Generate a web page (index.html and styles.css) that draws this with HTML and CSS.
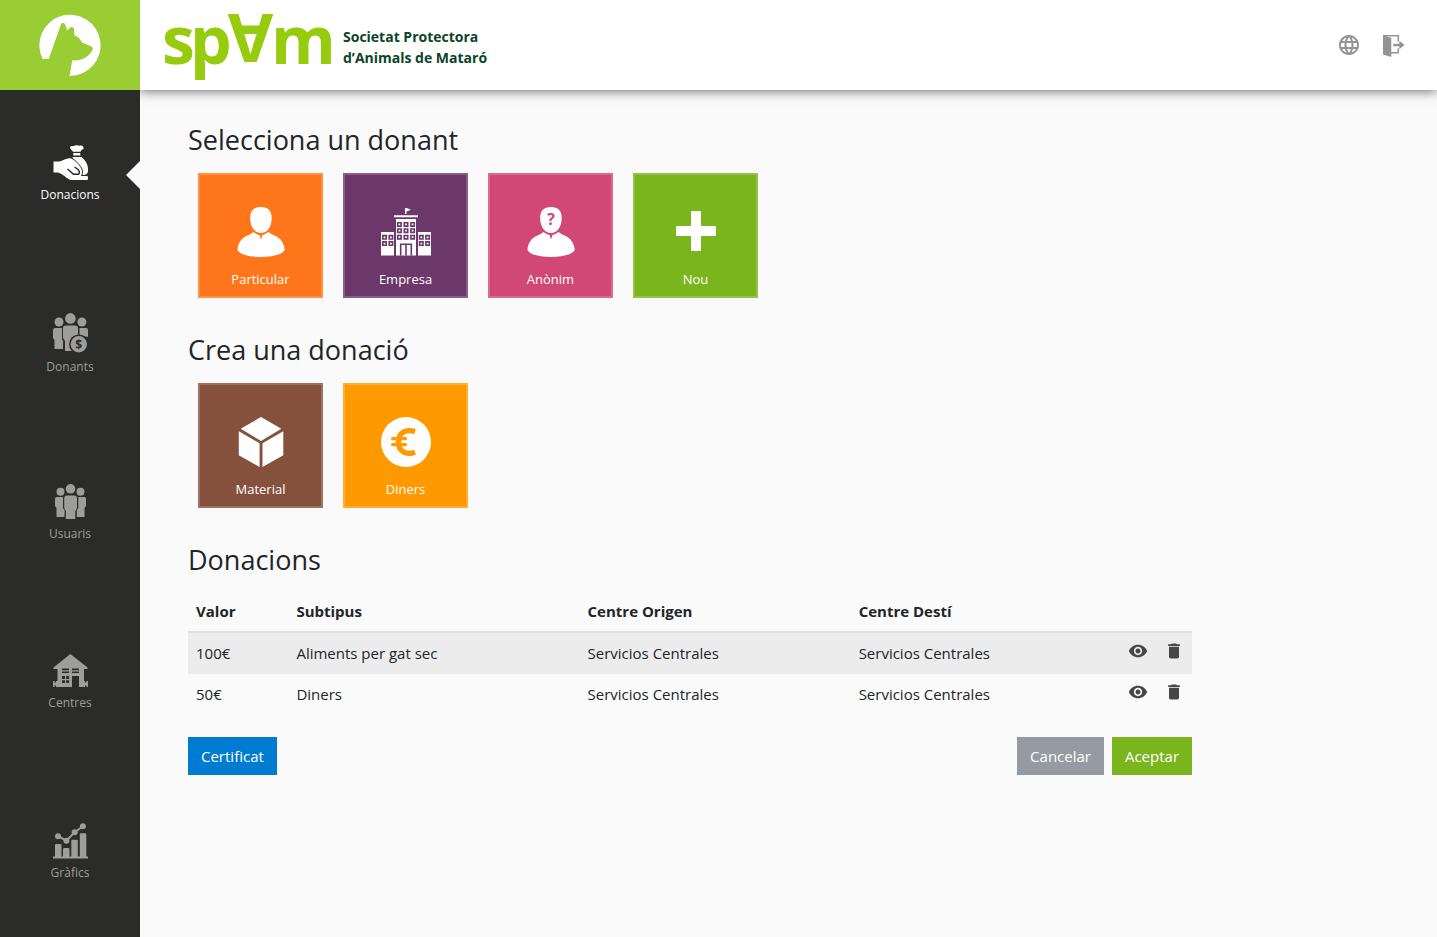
FILE: index.html
```html
<!DOCTYPE html>
<html lang="ca">
<head>
<meta charset="utf-8">
<meta name="viewport" content="width=device-width, initial-scale=1">
<title>SPAM - Donacions</title>
<link rel="stylesheet" href="styles.css">
</head>
<body>
<div class="app">
  <aside class="sidebar">
    <a class="brand" href="#" aria-label="Inici">
      <svg width="62" height="63" viewBox="39 14 62 63" fill="#fff"><path d="M42.6 59A30.6 30.6 0 1 1 69.5 75.9L72.3 60.3C81 61.5 89 57 92.7 49.5 93 48 92.500 47 91 46.300L82 42.500C81 40 78 36 74.500 35.700L74 28.500C73.500 27 71 26.500 70 27.500L67.300 30.500 65 24C64 22.700 62 22.500 61 24.300L48.700 59Z"/></svg>
    </a>
    <nav class="nav">
      <a class="nav-item active" href="#">
        <svg width="36" height="36" viewBox="-1 0 36 36"><path fill="currentColor" d="M17 2.500C17.500 .500 20 1.500 21.500 .800 23.500-.3 26 1 27.500.6 29.500.2 31 2 30.500 4 28.500 4.500 28 5.500 27.500 6.800H20C19.500 5.500 17 4.500 17 2.500ZM20.300 8h7v2.600h-7ZM19.500 12H28.500C33.500 16 35.500 21 35 26 34.800 29.500 32 30.500 26 30Z"/><path fill="currentColor" stroke="#2b2b29" d="M0 16H6.500C10 15 13 12.800 17 12.700 21 13.500 26 19 28.500 23 30 26 29.800 28.500 28.500 30.500H34C36 31 36 35 34 35.500H17C12 32.500 9 29 5 28H0Z"/><path fill="none" stroke="#2b2b29" stroke-width="1.500" d="M14.500 24 20.500 29.300H25.500C27 28 26.500 26 25 24.500L21.500 22"/></svg>
        <span>Donacions</span>
      </a>
      <a class="nav-item" href="#">
        <svg width="36" height="40" viewBox="-1 0 36 40" fill="currentColor"><circle cx="6" cy="9" r="4.500"/><circle cx="28.900" cy="9" r="4.500"/><circle cx="17.400" cy="5.400" r="5.300"/><path d="M2 15H9V26.500L10 28V36H1.500V27L0 25V17Q0 15 2 15ZM33 15H26.500V22L35 24V17Q35 15 33 15ZM12.500 12.500H22.500Q25 12.500 25 15V27L22 38H12V28L10 25V15Q10 12.500 12.500 12.500Z"/><circle cx="25.800" cy="31.300" r="9.800" fill="#2b2b29"/><circle cx="25.800" cy="31.300" r="8.200"/><text x="25.800" y="35.500" text-anchor="middle" font-size="12" font-weight="700" fill="#2b2b29">$</text></svg>
        <span>Donants</span>
      </a>
      <a class="nav-item" href="#">
        <svg width="32" height="36" viewBox="-1 0 32 36" fill="currentColor"><circle cx="5.500" cy="7.800" r="4"/><circle cx="25.500" cy="7.800" r="4"/><circle cx="15.500" cy="4.800" r="4.800"/><path d="M1.500 13H8V24L9.500 26V33H1.500V24L0 22V15Q0 13 1.500 13ZM29.500 13H23.300V24L21.800 26V33H29.500V24L31 22V15Q31 13 29.500 13ZM11.500 11.500H19.800Q22 11.500 22 14V24L20.300 27V35H10.800V27L9.200 24V14Q9.200 11.500 11.500 11.500Z"/></svg>
        <span>Usuaris</span>
      </a>
      <a class="nav-item" href="#">
        <svg width="36" height="36" viewBox="-1 -1 36 36" fill="currentColor"><path d="M17.400 0 34.500 13.500V15H31V33H26V22H19V33H4.500V15H.5V13.500ZM0 27h1.500v1.500H3V27h1.500v6H3v-1.500H1.500V33H0ZM30.500 27H32v1.500h1.500V27H35v6h-1.500v-1.500H32V33h-1.500Z"/><path d="M9 14.500h7V19H9ZM19 14.500h7V19h-7ZM9 22h7v7H9Z" fill="#2b2b29"/><path d="M8 16.200h19v1.200H8ZM8 25h9v1.200H8ZM12 21h1.200v9H12Z"/></svg>
        <span>Centres</span>
      </a>
      <a class="nav-item" href="#">
        <svg width="36" height="36" viewBox="-1 0 36 36" fill="currentColor"><path d="M0 33.500h35v2H0ZM2 22q0-1 1-1h4.500q1 0 1 1v12H2ZM10 26q0-1 1-1h4.500q1 0 1 1v8H10ZM18.300 17.700q0-1 1-1h4.500q1 0 1 1V34H18.300ZM26.800 11.300q0-1 1-1h4.500q1 0 1 1V34H26.800Z"/><path d="M5 13.200 13.400 17.700 21.700 9.200 29.900 3.300" fill="none" stroke="currentColor" stroke-width="2"/><circle cx="5" cy="13.200" r="3"/><circle cx="13.400" cy="17.700" r="3"/><circle cx="21.700" cy="9.200" r="3"/><circle cx="29.900" cy="3.300" r="3"/></svg>
        <span>Gràfics</span>
      </a>
    </nav>
  </aside>

  <header class="topbar">
    <a class="logo" href="#">
      <svg width="168" height="72" viewBox="0 0 168 72" fill="#97cb0e" class="wordmark"><text y="55" x="-2 26 107">spm</text><text transform="rotate(180 86.5 30)" x="86.5" y="55" text-anchor="middle">A</text></svg>
      <span class="tagline">Societat Protectora<br>d’Animals de Mataró</span>
    </a>
    <div class="tools">
      <button type="button" class="icon-btn" aria-label="Idioma"><svg width="24" height="24" viewBox="0 0 24 24" fill="currentColor"><path d="M11.990 2C6.470 2 2 6.480 2 12s4.470 10 9.990 10C17.520 22 22 17.520 22 12S17.520 2 11.990 2zm6.930 6h-2.950c-.32-1.250-.78-2.450-1.380-3.560 1.840.63 3.370 1.910 4.330 3.560zM12 4.040c.83 1.200 1.480 2.530 1.910 3.960h-3.820c.43-1.430 1.080-2.760 1.910-3.960zM4.260 14C4.100 13.360 4 12.690 4 12s.1-1.360.26-2h3.380c-.08.66-.14 1.320-.14 2 0 .68.06 1.340.14 2H4.260zm.82 2h2.950c.32 1.250.78 2.450 1.380 3.560-1.840-.63-3.370-1.900-4.330-3.560zm2.950-8H5.080c.96-1.660 2.490-2.930 4.330-3.560C8.810 5.550 8.350 6.750 8.030 8zM12 19.960c-.83-1.200-1.480-2.530-1.910-3.960h3.820c-.43 1.430-1.080 2.760-1.910 3.960zM14.340 14H9.660c-.09-.66-.16-1.320-.16-2 0-.68.07-1.350.16-2h4.680c.09.65.16 1.320.16 2 0 .68-.07 1.340-.16 2zm.25 5.560c.6-1.110 1.060-2.310 1.380-3.560h2.950c-.96 1.650-2.490 2.930-4.330 3.560zM16.360 14c.08-.66.14-1.320.14-2 0-.68-.06-1.340-.14-2h3.380c.16.64.26 1.310.26 2s-.1 1.360-.26 2h-3.380z"/></svg></button>
      <button type="button" class="icon-btn" aria-label="Surt"><svg width="22" height="24" viewBox="0 -2 22 24" fill="currentColor"><path d="M0 0 8.300 3V22L0 19.500ZM16.300 5.700 21.500 10 16.300 14.300V11.200H10.300V8.800H16.300Z"/><path d="M0 .8H15.300V6.500M15.300 13.500V17.700H8" fill="none" stroke="currentColor" stroke-width="1.500"/></svg></button>
    </div>
  </header>

  <main class="content">
    <section>
      <h2>Selecciona un donant</h2>
      <div class="tiles">
        <button type="button" class="tile orange">
          <svg width="50" height="50" viewBox="0 0 50 50" fill="#fff"><path d="M25 0C32 0 35.700 3.500 35.700 11 35.700 20 31 26 25 26S14.200 20 14.200 11C14.200 3.500 18 0 25 0ZM17.500 25C20 27 23 27.700 23.700 28.300L25 32.500 26.300 28.300C27 27.700 30 27 32.500 25 36 28 41 29 44 32 47 35 48.700 40 48.700 43 46 48 35 50 25 50S4 48 1.500 43C1.500 39 3 35 6 32 9 29 14 28 17.500 25Z"/></svg>
          <span>Particular</span>
        </button>
        <button type="button" class="tile purple">
          <svg width="50" height="50" viewBox="0 0 50 50" fill="#fff"><path d="M24 1h1.500l4.500 1.700-4.500 1.800V7H24ZM13 8.300h24v2H13ZM15 12h20v36.500H15ZM0 25h13v23.500H0ZM37 25h13v23.500H37Z"/><g fill="none" stroke="#6b3869" stroke-width="1.600"><path d="M16.700 15.700h3.400v3.400h-3.400ZM23.300 15.700h3.400v3.400h-3.400ZM29.900 15.700h3.400v3.400h-3.400ZM16.700 22h3.400v3.400h-3.400ZM23.300 22h3.400v3.400h-3.400ZM29.900 22h3.400v3.400h-3.400ZM16.700 28.500h3.400v3.400h-3.400ZM23.300 28.500h3.400v3.400h-3.400ZM29.900 28.500h3.400v3.400h-3.400ZM1.800 28.600h3.400V32H1.800ZM8.200 28.600h3.400V32H8.200ZM1.800 34.900h3.400v3.400H1.800ZM8.200 34.900h3.400v3.400H8.200ZM38.600 28.600H42V32h-3.400ZM44.900 28.600h3.400V32h-3.400ZM38.600 34.900H42v3.400h-3.400ZM44.900 34.900h3.400v3.400h-3.400ZM19.700 48.500V37.300H30.300V48.500M25 37V48.500"/></g></svg>
          <span>Empresa</span>
        </button>
        <button type="button" class="tile pink">
          <svg width="50" height="50" viewBox="0 0 50 50" fill="#fff"><path d="M25 0C32 0 35.700 3.500 35.700 11 35.700 20 31 26 25 26S14.200 20 14.200 11C14.200 3.500 18 0 25 0ZM17.500 25C20 27 23 27.700 23.700 28.300L25 32.500 26.300 28.300C27 27.700 30 27 32.500 25 36 28 41 29 44 32 47 35 48.700 40 48.700 43 46 48 35 50 25 50S4 48 1.500 43C1.500 39 3 35 6 32 9 29 14 28 17.500 25Z"/><text x="25" y="18" text-anchor="middle" font-size="16" font-weight="700" fill="#d14775">?</text></svg>
          <span>Anònim</span>
        </button>
        <button type="button" class="tile green">
          <svg width="50" height="50" viewBox="0 0 50 50" fill="#fff"><rect x="20" y="4" width="10" height="40" rx="1"/><rect x="5" y="19" width="40" height="10" rx="1"/></svg>
          <span>Nou</span>
        </button>
      </div>
    </section>

    <section>
      <h2>Crea una donació</h2>
      <div class="tiles">
        <button type="button" class="tile brown">
          <svg width="50" height="50" viewBox="0 0 50 50" fill="#fff"><path d="M25 0 45.300 11.800 25 24 4.700 11.800ZM2.800 14.300 23.600 26.300V50L2.800 38.300ZM47.300 14.300 26.500 26.300V50L47.300 38.300Z"/></svg>
          <span>Material</span>
        </button>
        <button type="button" class="tile amber">
          <svg width="50" height="50" viewBox="0 0 50 50" fill="none" stroke="#ff9900"><circle cx="25" cy="25" r="25" fill="#fff" stroke="none"/><path stroke-width="5.400" d="M34 14.600C26 12 17.500 14.500 17.500 25S26 38 34 35.200"/><path stroke-width="3.200" stroke-linecap="round" d="M11.600 21.700H24.500M11.600 27.700H24.500"/></svg>
          <span>Diners</span>
        </button>
      </div>
    </section>

    <section>
      <h2>Donacions</h2>
      <div class="donations">
        <table>
          <thead>
            <tr><th class="c-value" scope="col">Valor</th><th class="c-type" scope="col">Subtipus</th><th class="c-centre" scope="col">Centre Origen</th><th class="c-centre" scope="col">Centre Destí</th><th></th></tr>
          </thead>
          <tbody>
            <tr>
              <td>100€</td><td>Aliments per gat sec</td><td>Servicios Centrales</td><td>Servicios Centrales</td>
              <td><div class="actions">
                <button type="button" class="row-btn" aria-label="Veure"><svg width="20" height="20" viewBox="0 0 24 24" fill="currentColor"><path d="M12 4.500C7 4.500 2.730 7.610 1 12c1.730 4.390 6 7.500 11 7.500s9.270-3.110 11-7.500c-1.730-4.390-6-7.500-11-7.500zM12 17c-2.760 0-5-2.240-5-5s2.240-5 5-5 5 2.240 5 5-2.240 5-5 5zm0-8c-1.660 0-3 1.340-3 3s1.340 3 3 3 3-1.340 3-3-1.340-3-3-3z"/></svg></button>
                <button type="button" class="row-btn" aria-label="Eliminar"><svg width="20" height="20" viewBox="0 0 24 24" fill="currentColor"><path d="M6 19c0 1.100.9 2 2 2h8c1.100 0 2-.9 2-2V7H6v12zM19 4h-3.500l-1-1h-5l-1 1H5v2h14V4z"/></svg></button>
              </div></td>
            </tr>
            <tr>
              <td>50€</td><td>Diners</td><td>Servicios Centrales</td><td>Servicios Centrales</td>
              <td><div class="actions">
                <button type="button" class="row-btn" aria-label="Veure"><svg width="20" height="20" viewBox="0 0 24 24" fill="currentColor"><path d="M12 4.500C7 4.500 2.730 7.610 1 12c1.730 4.390 6 7.500 11 7.500s9.270-3.110 11-7.500c-1.730-4.390-6-7.500-11-7.500zM12 17c-2.760 0-5-2.240-5-5s2.240-5 5-5 5 2.240 5 5-2.240 5-5 5zm0-8c-1.660 0-3 1.340-3 3s1.340 3 3 3 3-1.340 3-3-1.340-3-3-3z"/></svg></button>
                <button type="button" class="row-btn" aria-label="Eliminar"><svg width="20" height="20" viewBox="0 0 24 24" fill="currentColor"><path d="M6 19c0 1.100.9 2 2 2h8c1.100 0 2-.9 2-2V7H6v12zM19 4h-3.500l-1-1h-5l-1 1H5v2h14V4z"/></svg></button>
              </div></td>
            </tr>
          </tbody>
        </table>
        <div class="footer-actions">
          <button type="button" class="btn blue">Certificat</button>
          <button type="button" class="btn grey push">Cancelar</button>
          <button type="button" class="btn green">Aceptar</button>
        </div>
      </div>
    </section>
  </main>
</div>
</body>
</html>
```

FILE: styles.css
```css
* { box-sizing: border-box; }

body {
  margin: 0;
  background: #fafafa;
  color: #212529;
  font-family: "Open Sans", "Noto Sans", sans-serif;
  font-size: 15px;
  line-height: 24px;
}

button {
  font: inherit;
  cursor: pointer;
}

svg { display: block; }

.app {
  display: grid;
  grid-template-columns: 140px 1fr;
  grid-template-rows: 90px 1fr;
  min-height: 100vh;
}

/* Sidebar */
.sidebar {
  grid-row: 1 / 3;
  display: flex;
  flex-direction: column;
  background: #2b2b29;
  position: relative;
  z-index: 2;
}

.brand {
  display: flex;
  align-items: center;
  justify-content: center;
  height: 90px;
  background: #9acc33;
}

.nav {
  flex: 1;
  display: flex;
  flex-direction: column;
}

.nav-item {
  flex: 1;
  position: relative;
  display: flex;
  flex-direction: column;
  align-items: center;
  justify-content: center;
  gap: 5px;
  color: #9d9d9c;
  font-size: 12px;
  font-weight: 500;
  line-height: 18px;
  text-decoration: none;
}

.nav-item.active { color: #fff; }

.nav-item.active::after {
  content: "";
  position: absolute;
  right: 0;
  top: 50%;
  margin-top: -14px;
  border: 14px solid transparent;
  border-left-width: 0;
  border-right-color: #fafafa;
}

/* Header */
.topbar {
  display: flex;
  align-items: center;
  justify-content: space-between;
  padding: 0 32px 0 24px;
  background: #fff;
  box-shadow: 0 2px 10px rgba(0, 0, 0, 0.5);
  z-index: 1;
}

.logo {
  display: flex;
  align-items: center;
  gap: 11px;
  text-decoration: none;
}

.wordmark {
  font-size: 66px;
  font-weight: 700;
  overflow: visible;
}

.tagline {
  color: #0c4428;
  font-size: 14px;
  font-weight: 700;
  line-height: 21px;
  padding-top: 4px;
}

.tools {
  display: flex;
  align-items: center;
  gap: 22px;
}

.icon-btn,
.row-btn {
  padding: 0;
  border: 0;
  background: none;
}

.icon-btn { color: #949494; }
.row-btn { color: #464646; }

/* Content */
.content { padding: 33px 48px; }

section { margin-bottom: 35px; }

h2 {
  margin: 0;
  font-size: 27px;
  font-weight: 500;
  line-height: 34px;
}

.tiles {
  display: flex;
  flex-wrap: wrap;
  gap: 20px;
  padding: 16px 10px 0;
}

.tile {
  display: flex;
  flex-direction: column;
  align-items: center;
  width: 125px;
  height: 125px;
  padding: 32px 0 0;
  border: 2px solid rgba(255, 255, 255, 0.2);
  color: #fff;
  font-size: 13px;
  line-height: 20px;
  gap: 12px;
}

.orange { background: #ff751a; }
.purple { background: #6b3869; }
.pink { background: #d14775; }
.green { background: #7ab51d; }
.brown { background: #85513d; }
.amber { background: #ff9900; }
.blue { background: #007bd2; }
.grey { background: #969ba3; }

/* Donations */
.donations {
  width: 83.6%;
  padding-top: 14px;
}

table {
  width: 100%;
  table-layout: fixed;
  border-collapse: separate;
  border-spacing: 0;
}

th,
td {
  padding: 8px;
  text-align: left;
}

th {
  font-weight: 700;
  border-bottom: 2px solid #dee2e6;
}

td { padding-bottom: 9px; }

tbody tr:nth-child(odd) { background: #ececec; }

.c-value { width: 10%; }
.c-type { width: 29%; }
.c-centre { width: 27%; }

.actions {
  display: flex;
  align-items: flex-start;
  justify-content: flex-end;
  gap: 16px;
  height: 24px;
}

.footer-actions {
  display: flex;
  gap: 8px;
  margin-top: 22px;
}

.btn {
  padding: 7px 13px;
  border: 0;
  color: #fff;
}

.push { margin-left: auto; }
```
